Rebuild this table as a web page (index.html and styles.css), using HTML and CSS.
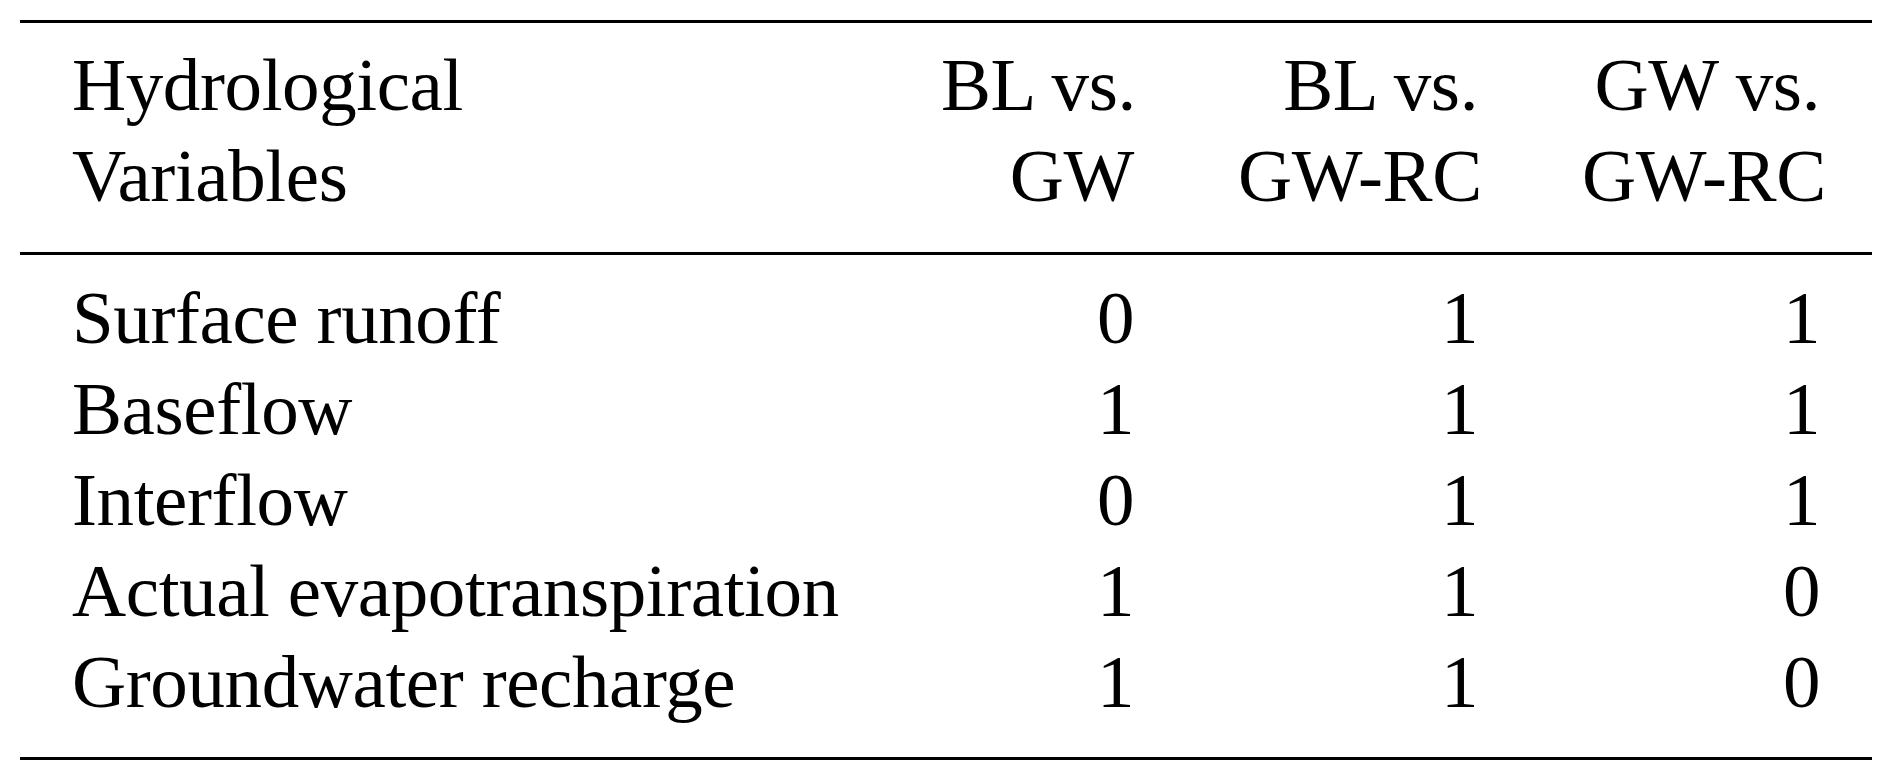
FILE: index.html
```html
<!DOCTYPE html>
<html lang="en">
<head>
<meta charset="utf-8">
<title>Hydrological Variables</title>
<link rel="stylesheet" href="styles.css">
</head>
<body>
<table class="tbl">
  <colgroup>
    <col class="c1">
    <col class="c2">
    <col class="c3">
    <col class="c4">
  </colgroup>
  <thead>
    <tr>
      <th class="left">Hydrological<br>Variables</th>
      <th class="num">BL vs.<br>GW</th>
      <th class="num">BL vs.<br>GW-RC</th>
      <th class="num">GW vs.<br>GW-RC</th>
    </tr>
  </thead>
  <tbody>
    <tr class="first">
      <td class="left">Surface runoff</td>
      <td class="num">0</td>
      <td class="num">1</td>
      <td class="num">1</td>
    </tr>
    <tr>
      <td class="left">Baseflow</td>
      <td class="num">1</td>
      <td class="num">1</td>
      <td class="num">1</td>
    </tr>
    <tr>
      <td class="left">Interflow</td>
      <td class="num">0</td>
      <td class="num">1</td>
      <td class="num">1</td>
    </tr>
    <tr>
      <td class="left">Actual evapotranspiration</td>
      <td class="num">1</td>
      <td class="num">1</td>
      <td class="num">0</td>
    </tr>
    <tr class="last">
      <td class="left">Groundwater recharge</td>
      <td class="num">1</td>
      <td class="num">1</td>
      <td class="num">0</td>
    </tr>
  </tbody>
</table>
</body>
</html>
```
FILE: styles.css
```css
html, body {
  margin: 0;
  padding: 0;
  background: #ffffff;
}

body {
  font-family: "Liberation Serif", "Times New Roman", serif;
  font-size: 75px;
  letter-spacing: -0.4px;
  line-height: 91px;
  color: #000000;
}

.tbl {
  margin: 20px 0 0 20px;
  width: 1852px;
  table-layout: fixed;
  border-collapse: separate;
  border-spacing: 0;
}

.c1 { width: 869px; }
.c2 { width: 297px; }
.c3 { width: 344px; }
.c4 { width: 342px; }

.tbl th,
.tbl td {
  padding: 0 52px;
  font-weight: normal;
  vertical-align: top;
  white-space: nowrap;
}

.tbl th {
  padding-top: 16px;
  padding-bottom: 31px;
  border-top: 3px solid #000000;
  border-bottom: 3px solid #000000;
}

.tbl tr.first td {
  padding-top: 17px;
}

.tbl tr.last td {
  padding-bottom: 30px;
  border-bottom: 3px solid #000000;
}

.left { text-align: left; }
.num { text-align: right; }
```
